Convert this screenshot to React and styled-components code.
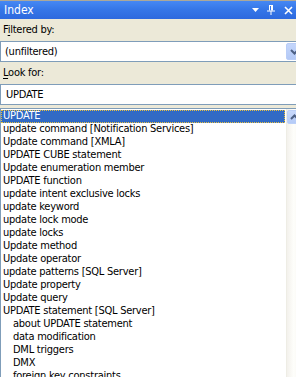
import React from 'react';
import styled, { createGlobalStyle } from 'styled-components';

const GlobalStyle = createGlobalStyle`
  html, body {
    margin: 0;
    padding: 0;
    width: 296px;
    height: 377px;
    overflow: hidden;
    background: #ece9d8;
  }
  body {
    font-family: 'DejaVu Sans', sans-serif;
    font-stretch: condensed;
    font-size: 11px;
    letter-spacing: -0.25px;
  }
`;

const Panel = styled.div`
  width: 304px;
  height: 377px;
  display: flex;
  flex-direction: column;
  background: #ece9d8;
  border-top: 1px solid #aca899;
  box-sizing: border-box;
`;

const TitleBar = styled.div`
  height: 18px;
  flex: none;
  display: flex;
  align-items: center;
  padding: 0 0 0 4px;
  background: linear-gradient(to bottom, #4688f4 0%, #3677e8 45%, #2d69de 100%);
  color: #fff;
  font-size: 12px;
  letter-spacing: 0;
`;

const Title = styled.span`
  flex: 1;
`;

const TitleButtons = styled.div`
  display: flex;
  align-items: center;
  width: 52px;
`;

const TitleIcon = styled.svg`
  display: block;
  flex: none;
  margin-right: ${p => p.$mr || 0}px;
`;

const Label = styled.div`
  height: ${p => p.$h}px;
  flex: none;
  display: flex;
  align-items: flex-end;
  padding: 0 0 ${p => p.$pb}px 3px;
  box-sizing: border-box;
  color: #000;
  u { text-decoration: underline; text-underline-offset: 2px; }
`;

const Field = styled.div`
  height: 21px;
  flex: none;
  display: flex;
  align-items: stretch;
  border: 1px solid #7f9db9;
  background: #fff;
  box-sizing: border-box;
`;

const FieldText = styled.div`
  flex: 1;
  display: flex;
  align-items: center;
  padding-left: ${p => p.$pl}px;
  color: #000;
`;

const DropButton = styled.div`
  width: 17px;
  margin: 1px 0;
  flex: none;
  display: flex;
  align-items: center;
  padding-left: 3px;
  box-sizing: border-box;
  background: linear-gradient(to bottom, #c4d6fb, #b3c9f6);
  border: 1px solid #b9cdf7;
  border-radius: 2px;
`;

const ListBox = styled.div`
  flex: 1;
  margin-top: 3px;
  display: flex;
  background: #fff;
  border-top: 1px solid #7f9db9;
  border-left: 1px solid #7f9db9;
  min-height: 0;
  overflow: hidden;
`;

const Rows = styled.div`
  flex: 1;
  padding-top: 1px;
  min-width: 0;
`;

const Row = styled.div`
  height: 13px;
  line-height: 12px;
  padding-left: ${p => (p.$sub ? 12 : 2)}px;
  white-space: nowrap;
  box-sizing: border-box;
  color: ${p => (p.$selected ? '#fff' : '#000')};
  background: ${p => (p.$selected ? '#316ac5' : 'transparent')};
  outline: ${p => (p.$selected ? '1px dotted #e8c040' : 'none')};
  outline-offset: -1px;
`;

const ScrollBar = styled.div`
  width: 17px;
  flex: none;
  margin-left: 1px;
  padding-top: 1px;
  background: linear-gradient(to right, #f3f1ec, #fefefb 40%, #f0efe8);
  border-left: 1px solid #eeede5;
`;

const ArrowButton = styled.div`
  height: 12px;
  display: flex;
  align-items: center;
  padding-left: 2px;
  background: linear-gradient(to bottom, #c8d9fc, #b5cbf7);
  border: 1px solid #bcd0f8;
  border-radius: 2px;
`;

const items = [
  { t: 'UPDATE', sel: true },
  { t: 'update command [Notification Services]' },
  { t: 'Update command [XMLA]' },
  { t: 'UPDATE CUBE statement' },
  { t: 'Update enumeration member' },
  { t: 'UPDATE function' },
  { t: 'update intent exclusive locks' },
  { t: 'update keyword' },
  { t: 'update lock mode' },
  { t: 'update locks' },
  { t: 'Update method' },
  { t: 'Update operator' },
  { t: 'update patterns [SQL Server]' },
  { t: 'Update property' },
  { t: 'Update query' },
  { t: 'UPDATE statement [SQL Server]' },
  { t: 'about UPDATE statement', sub: true },
  { t: 'data modification', sub: true },
  { t: 'DML triggers', sub: true },
  { t: 'DMX', sub: true },
  { t: 'foreign key constraints', sub: true },
];

export default function App() {
  return (
    <>
      <GlobalStyle />
      <Panel>
        <TitleBar>
          <Title>Index</Title>
          <TitleButtons>
            <TitleIcon width="8" height="4" viewBox="0 0 8 4" $mr={7}>
              <path d="M0 0h7L3.5 4z" fill="#fff" />
            </TitleIcon>
            <TitleIcon width="8" height="10" viewBox="0 0 8 10" $mr={9}>
              <path d="M2 0.5h4M2.5 0.5v5M5.5 0.5v5M0 6h8M4 6v4" stroke="#fff" strokeWidth="1" fill="none" />
              <path d="M4.5 1v4.5" stroke="#fff" strokeWidth="1" />
            </TitleIcon>
            <TitleIcon width="9" height="9" viewBox="0 0 9 9">
              <path d="M1 1l7 7M8 1l-7 7" stroke="#fff" strokeWidth="1.6" />
            </TitleIcon>
          </TitleButtons>
        </TitleBar>
        <Label $h={22} $pb={5}>
          <span>F<u>i</u>ltered by:</span>
        </Label>
        <Field>
          <FieldText $pl={4}>(unfiltered)</FieldText>
          <DropButton>
            <svg width="9" height="6" viewBox="0 0 9 6">
              <path d="M1 1l3.5 3.5L8 1" stroke="#4d6185" strokeWidth="2" fill="none" />
            </svg>
          </DropButton>
        </Field>
        <Label $h={22} $pb={5}>
          <span><u>L</u>ook for:</span>
        </Label>
        <Field>
          <FieldText $pl={5}>UPDATE</FieldText>
        </Field>
        <ListBox>
          <Rows>
            {items.map(it => (
              <Row key={it.t} $sub={it.sub} $selected={it.sel}>{it.t}</Row>
            ))}
          </Rows>
          <ScrollBar>
            <ArrowButton>
              <svg width="9" height="6" viewBox="0 0 9 6">
                <path d="M1 5l3.5-3.5L8 5" stroke="#4d6185" strokeWidth="2" fill="none" />
              </svg>
            </ArrowButton>
          </ScrollBar>
        </ListBox>
      </Panel>
    </>
  );
}
